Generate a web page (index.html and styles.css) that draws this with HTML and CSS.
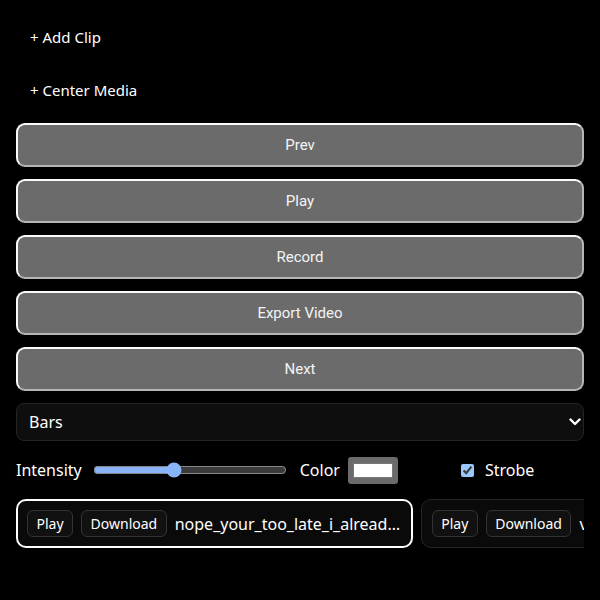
FILE: index.html
```html
<!DOCTYPE html>
<html lang="en">
<head>
<meta charset="utf-8">
<title>Visualizer</title>
<link rel="stylesheet" href="styles.css">
</head>
<body>
<div class="app">
  <button class="text-btn first">+ Add Clip</button>
  <button class="text-btn second">+ Center Media</button>
  <button class="big-btn">Prev</button>
  <button class="big-btn">Play</button>
  <button class="big-btn">Record</button>
  <button class="big-btn">Export Video</button>
  <button class="big-btn">Next</button>
  <div class="select-wrap">
    <select class="mode">
      <option>Bars</option>
      <option>Wave</option>
      <option>Circle</option>
    </select>
    <svg class="chevron" width="12" height="8" viewBox="0 0 12 8"><path d="M1.5 1.5 L6 6 L10.5 1.5" fill="none" stroke="#fff" stroke-width="2.4" stroke-linecap="round" stroke-linejoin="round"/></svg>
  </div>
  <div class="controls">
    <span class="lbl">Intensity</span>
    <input class="range" type="range" min="0" max="100" value="41">
    <span class="lbl color-lbl">Color</span>
    <input class="color" type="color" value="#ffffff">
    <input class="check" type="checkbox" checked>
    <span class="lbl strobe-lbl">Strobe</span>
  </div>
  <div class="clips">
    <div class="clip selected">
      <button class="clip-btn">Play</button>
      <button class="clip-btn">Download</button>
      <span class="clip-name">nope_your_too_late_i_already_died.mp3</span>
    </div>
    <div class="clip">
      <button class="clip-btn">Play</button>
      <button class="clip-btn">Download</button>
      <span class="clip-name">voice_memo_final_take.mp3</span>
    </div>
  </div>
</div>
</body>
</html>
```

FILE: styles.css
```css
html, body {
  margin: 0;
  padding: 0;
  background: #000;
  color: #fff;
  color-scheme: dark;
  font-family: "Noto Sans", "Open Sans", sans-serif;
  font-size: 16px;
}

.app {
  display: flex;
  flex-direction: column;
  gap: 12px;
  padding: 16px;
  width: 568px;
}

.text-btn {
  background: transparent;
  border: none;
  color: #fff;
  font-family: "Noto Sans", sans-serif;
  font-size: 15px;
  text-align: left;
  padding: 0 14px;
  margin: 0;
}
.text-btn.first { height: 41px; }
.text-btn.second { height: 42px; }

.big-btn {
  height: 44px;
  margin: 0;
  background: #6b6b6b;
  color: #f4f4f4;
  font-family: Roboto, "Liberation Sans", sans-serif;
  font-size: 15px;
  border: 2px solid;
  border-color: #fafafa #b5b5b5 #b5b5b5 #fafafa;
  border-radius: 9px;
}

.select-wrap {
  position: relative;
  height: 38px;
}
.mode {
  appearance: none;
  -webkit-appearance: none;
  width: 100%;
  height: 38px;
  margin: 0;
  background: #0e0e0e;
  color: #fff;
  border: 1px solid #242424;
  border-radius: 8px;
  padding: 0 12px;
  font-family: "Noto Sans", sans-serif;
  font-size: 16px;
}
.chevron {
  position: absolute;
  right: 3px;
  top: 15px;
}

.controls {
  display: flex;
  align-items: center;
  height: 34px;
}
.lbl { font-size: 16px; }
.range {
  width: 194px;
  margin: 0 0 0 11px;
  accent-color: #8ab4f8;
}
.color-lbl { margin-left: 13px; }
.color {
  margin: 0 0 0 8px;
  width: 50px;
  height: 27px;
}
.check {
  margin: 0 0 0 63px;
  width: 13px;
  height: 13px;
}
.strobe-lbl { margin-left: 11px; }

.clips {
  display: flex;
  gap: 8px;
  overflow: hidden;
}
.clip {
  flex: none;
  display: flex;
  align-items: center;
  gap: 8px;
  padding: 9px 10px;
  border: 1px solid #262626;
  border-radius: 10px;
  background: #0a0a0a;
}
.clip.selected {
  border: 2px solid #fff;
  padding: 9px 9px;
}
.clip-btn {
  height: 27px;
  margin: 0;
  padding: 0 8.5px;
  background: #111;
  color: #fff;
  border: 1px solid #333;
  border-radius: 6px;
  font-family: "Noto Sans", sans-serif;
  font-size: 14px;
}
.clip-name {
  font-size: 16px;
  max-width: 227px;
  white-space: nowrap;
  overflow: hidden;
  text-overflow: ellipsis;
}
```
